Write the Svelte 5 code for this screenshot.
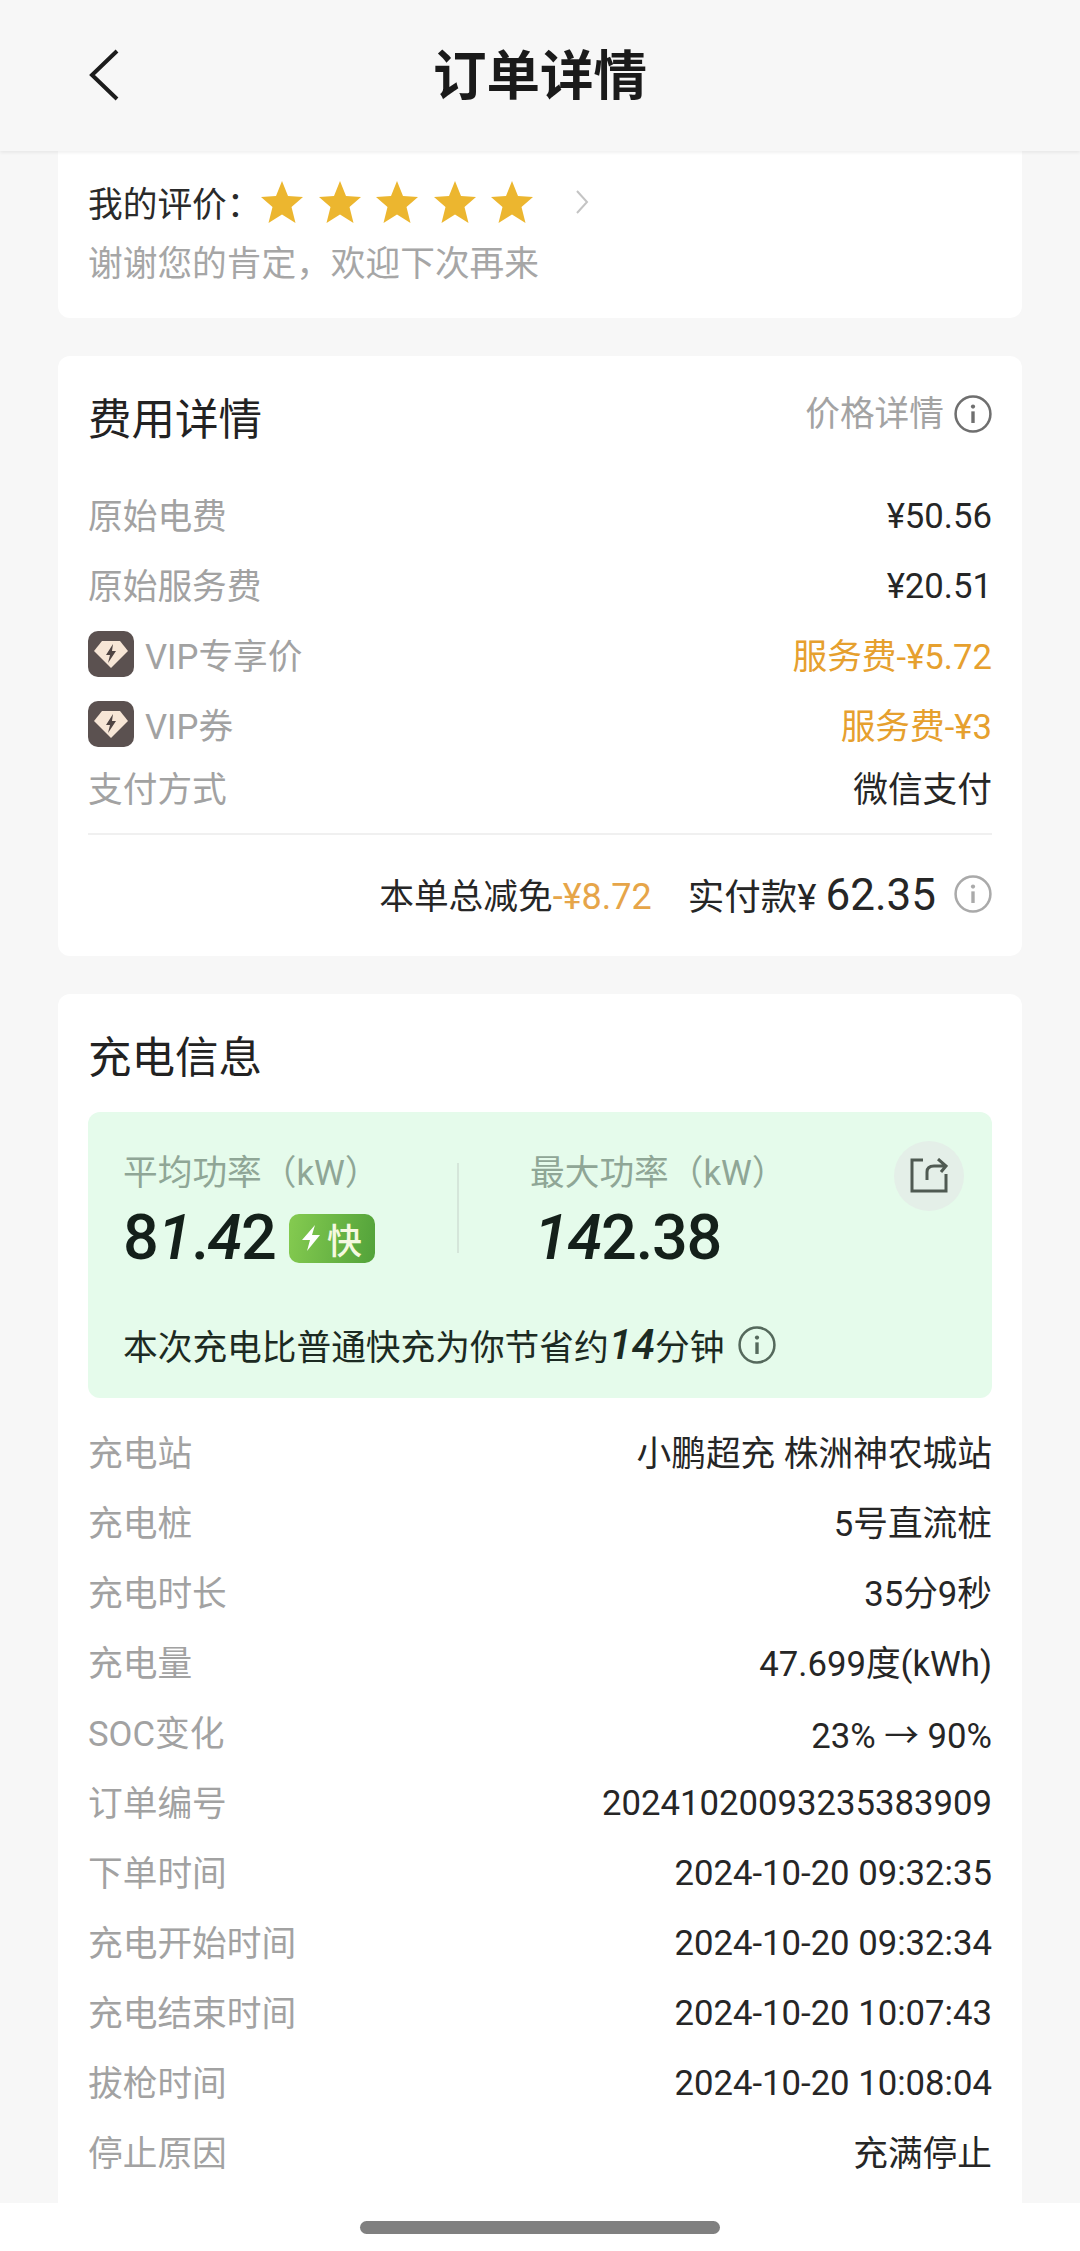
<script>
	const feeRows = [
		{ label: '原始电费', value: '¥50.56' },
		{ label: '原始服务费', value: '¥20.51' },
		{ label: 'VIP专享价', value: '服务费-¥5.72', vip: true },
		{ label: 'VIP券', value: '服务费-¥3', vip: true },
		{ label: '支付方式', value: '微信支付', short: true }
	];
	const chargeRows = [
		['充电站', '小鹏超充 株洲神农城站'],
		['充电桩', '5号直流桩'],
		['充电时长', '35分9秒'],
		['充电量', '47.699度(kWh)'],
		['SOC变化', '23% → 90%'],
		['订单编号', '20241020093235383909'],
		['下单时间', '2024-10-20 09:32:35'],
		['充电开始时间', '2024-10-20 09:32:34'],
		['充电结束时间', '2024-10-20 10:07:43'],
		['拔枪时间', '2024-10-20 10:08:04'],
		['停止原因', '充满停止']
	];
	// values with no Chinese get a shorter line box, so they need nudging down to the label
	const isLatin = (v) => !/[\u4e00-\u9fff]/.test(v);
</script>

{#snippet info(color)}
	<svg class="info" viewBox="0 0 36 36" fill="none" stroke={color}>
		<circle cx="18" cy="18" r="16.5" stroke-width="2.4" />
		<rect x="16.4" y="15.5" width="3.2" height="11" fill={color} stroke="none" />
		<circle cx="18" cy="11" r="2" fill={color} stroke="none" />
	</svg>
{/snippet}

<div class="page">
	<header class="topbar">
		<svg class="back" viewBox="0 0 32 52" fill="none" stroke="#1c1c1c" stroke-width="4">
			<path d="M29 2 L4 26 L29 50" />
		</svg>
		<h1>订单详情</h1>
	</header>

	<main class="content">
		<section class="card rating">
			<div class="rate-line">
				<span class="rate-label">我的评价：</span>
				<div class="stars">
					{#each [1, 2, 3, 4, 5] as s (s)}
						<svg viewBox="0 0 44 44" class="star">
							<path fill="#ecb62f" d="M22 1 L28 16 L43 17 L31.500 27 L35.500 43 L22 34.500 L8.500 43 L12.500 27 L1 17 L16 16 Z" />
						</svg>
					{/each}
				</div>
				<svg class="chevron" viewBox="0 0 14 24" fill="none" stroke="#c4c4c4" stroke-width="2">
					<path d="M2 1 L12 12 L2 23" />
				</svg>
			</div>
			<p class="thanks">谢谢您的肯定，欢迎下次再来</p>
		</section>

		<section class="card fees">
			<div class="card-head">
				<h2>费用详情</h2>
				<div class="price-link">价格详情 {@render info('#6f6f6f')}</div>
			</div>
			<div class="fee-rows">
				{#each feeRows as row (row.label)}
					<div class="row" class:short={row.short}>
						<span class="key">
							{#if row.vip}
								<svg class="vip" viewBox="0 0 46 46">
									<rect width="46" height="46" rx="10" fill="#5b5150" />
									<path fill="#f7e6d6" d="M14 10 H32 L40 20 L23 37 L6 20 Z" />
									<path fill="#4f4443" d="M25 13 L18 24 H22 L20 32 L28 20 H24 Z" />
								</svg>
							{/if}
							{row.label}
						</span>
						<span class="val" class:latin={isLatin(row.value)} class:orange={row.vip}>{row.value}</span>
					</div>
				{/each}
			</div>
			<div class="total">
				<span>本单总减免<span class="discount">-¥8.72</span></span>
				<span class="paid">实付款¥ <b>62.35</b></span>
				{@render info('#aaaaaa')}
			</div>
		</section>

		<section class="card charge">
			<h2>充电信息</h2>
			<div class="power">
				<div class="power-top">
					<div class="metric first">
						<div class="metric-label">平均功率（kW）</div>
						<div class="metric-num">
							<span class="num">8<i>1</i>.<i>4</i>2</span>
							<span class="fast">
								<svg viewBox="0 0 20 28" class="bolt"><path fill="#fff" d="M14 1 L1 16 H9 L6 27 L19 11 H11 Z" /></svg>快
							</span>
						</div>
					</div>
					<div class="metric second">
						<div class="metric-label">最大功率（kW）</div>
						<div class="metric-num"><span class="num"><i>14</i>2.38</span></div>
					</div>
					<div class="share">
						<svg viewBox="0 0 38 36" fill="none" stroke="#4f5a52" stroke-width="3">
							<path d="M13 2 H2 V33 H36 V16" />
							<path d="M17 22 V14 Q17 8 24 8 H35 M28 1 L36 8 L31 14" />
						</svg>
					</div>
				</div>
				<div class="saving">
					本次充电比普通快充为你节省约<i class="mins">14</i>分钟 {@render info('#55695c')}
				</div>
			</div>
			<div class="charge-rows">
				{#each chargeRows as [k, v] (k)}
					<div class="row">
						<span class="key">{k}</span>
						<span class="val" class:latin={isLatin(v)}>{v}</span>
					</div>
				{/each}
			</div>
		</section>
	</main>

	<footer class="home">
		<div class="pill"></div>
	</footer>
</div>

<style>
	:global(body) {
		margin: 0;
		background: #f7f7f7;
	}
	.page {
		width: 1080px;
		height: 2251px;
		display: flex;
		flex-direction: column;
		overflow: hidden;
		font-family: Roboto, 'Noto Sans CJK SC', sans-serif;
		font-size: 34.700px;
		color: #222;
	}
	.topbar {
		height: 151px;
		flex: none;
		display: flex;
		align-items: center;
		justify-content: center;
		background: #f7f7f7;
		box-shadow: 0 2px 3px rgba(0, 0, 0, 0.06);
		position: relative;
		z-index: 1;
		box-sizing: border-box;
		padding-top: 2px;
	}
	.back {
		position: absolute;
		left: 88px;
		top: 49px;
		width: 32px;
		height: 52px;
	}
	h1 {
		margin: 0;
		font-size: 53.500px;
		font-weight: 700;
		color: #1a1a1a;
		line-height: 1;
	}
	.content {
		flex: 1;
		min-height: 0;
		padding: 0 58px;
		display: flex;
		flex-direction: column;
		gap: 38px;
		overflow: hidden;
	}
	.card {
		background: #fff;
		border-radius: 12px;
		padding: 0 30px;
	}
	.rating {
		border-radius: 0 0 12px 12px;
		height: 167px;
		box-sizing: border-box;
		padding-top: 26px;
		flex: none;
	}
	.rate-line {
		display: flex;
		align-items: center;
		height: 50px;
	}
	.rate-label {
		width: 172px;
		white-space: nowrap;
		color: #2a2a2a;
	}
	.stars {
		display: flex;
		gap: 13.500px;
	}
	.star {
		width: 44px;
		height: 44px;
		display: block;
	}
	.chevron {
		width: 14px;
		height: 24px;
		margin-left: 41px;
	}
	.thanks {
		margin: 12px 0 0;
		color: #a6a6a6;
		line-height: 50px;
	}
	.fees {
		height: 600px;
		box-sizing: border-box;
		padding-top: 35px;
		flex: none;
	}
	.card-head {
		display: flex;
		justify-content: space-between;
		align-items: flex-start;
	}
	h2 {
		margin: 0;
		font-size: 43.500px;
		font-weight: 400;
		line-height: 60px;
		color: #222;
	}
	.price-link {
		display: flex;
		align-items: center;
		gap: 10px;
		color: #a3a3a3;
		line-height: 46px;
	}
	.info {
		width: 38px;
		height: 38px;
		flex: none;
	}
	.fee-rows {
		margin-top: 28px;
		padding-bottom: 18px;
		border-bottom: 2px solid #f0f0f0;
	}
	.row {
		display: flex;
		justify-content: space-between;
		align-items: center;
		height: 70px;
	}
	.row.short {
		height: 56px;
	}
	.key {
		color: #a2a2a2;
		display: flex;
		align-items: center;
		gap: 11px;
		white-space: nowrap;
	}
	.val {
		color: #262626;
		white-space: nowrap;
	}
	.val.latin {
		padding-top: 3px;
	}
	.val.orange {
		color: #e6a02e;
	}
	.vip {
		width: 46px;
		height: 46px;
		display: block;
	}
	.total {
		display: flex;
		justify-content: flex-end;
		align-items: center;
		height: 118px;
		color: #262626;
	}
	.discount {
		color: #e6a549;
		font-size: 36px;
	}
	.paid {
		margin-left: 36px;
		margin-right: 18px;
		font-size: 36.500px;
	}
	.paid b {
		font-size: 44px;
		font-weight: 400;
	}
	.charge {
		flex: 1;
		padding-top: 35px;
		border-radius: 12px 12px 0 0;
		min-height: 0;
	}
	.power {
		margin-top: 23px;
		height: 286px;
		box-sizing: border-box;
		background: #e5fbeb;
		border-radius: 12px;
		padding: 29px 28px 0 35px;
	}
	.power-top {
		display: flex;
		position: relative;
		height: 146px;
	}
	.metric {
		padding-top: 9px;
	}
	.metric.first {
		width: 336px;
		position: relative;
	}
	.metric.first::after {
		content: '';
		position: absolute;
		right: 0;
		top: 22px;
		width: 2px;
		height: 90px;
		background: #d5e6da;
	}
	.metric.second {
		margin-left: 71px;
	}
	.metric.second .num {
		margin-left: 4px;
	}
	.metric-label {
		color: #8fa696;
		line-height: 46px;
		white-space: nowrap;
	}
	.metric-num {
		display: flex;
		align-items: center;
		gap: 13px;
		margin-top: 6px;
	}
	.num {
		font-size: 63px;
		font-weight: 500;
		letter-spacing: -1.200px;
		color: #14201a;
		line-height: 72px;
	}
	.fast {
		width: 86px;
		height: 49px;
		border-radius: 10px;
		background: linear-gradient(100deg, #85cb50, #52a23a);
		color: #f5f9e0;
		font-size: 35px;
		font-weight: 500;
		display: flex;
		align-items: center;
		justify-content: center;
		gap: 6px;
	}
	.bolt {
		width: 20px;
		height: 28px;
	}
	.share {
		position: absolute;
		right: 0;
		top: 0;
		width: 70px;
		height: 70px;
		border-radius: 50%;
		background: #e4efe8;
		display: flex;
		align-items: center;
		justify-content: center;
	}
	.share svg {
		width: 38px;
		height: 36px;
	}
	.saving {
		margin-top: 33px;
		color: #1c2a22;
		display: flex;
		align-items: center;
		white-space: nowrap;
	}
	.mins {
		font-size: 42px;
		font-weight: 500;
		line-height: 46px;
	}
	.saving .info {
		margin-left: 14px;
	}
	.charge-rows {
		margin-top: 18px;
	}
	.home {
		height: 48px;
		flex: none;
		background: #fff;
		display: flex;
		justify-content: center;
		padding-top: 18px;
		box-sizing: border-box;
	}
	.pill {
		width: 360px;
		height: 13px;
		border-radius: 7px;
		background: #808080;
	}
</style>
